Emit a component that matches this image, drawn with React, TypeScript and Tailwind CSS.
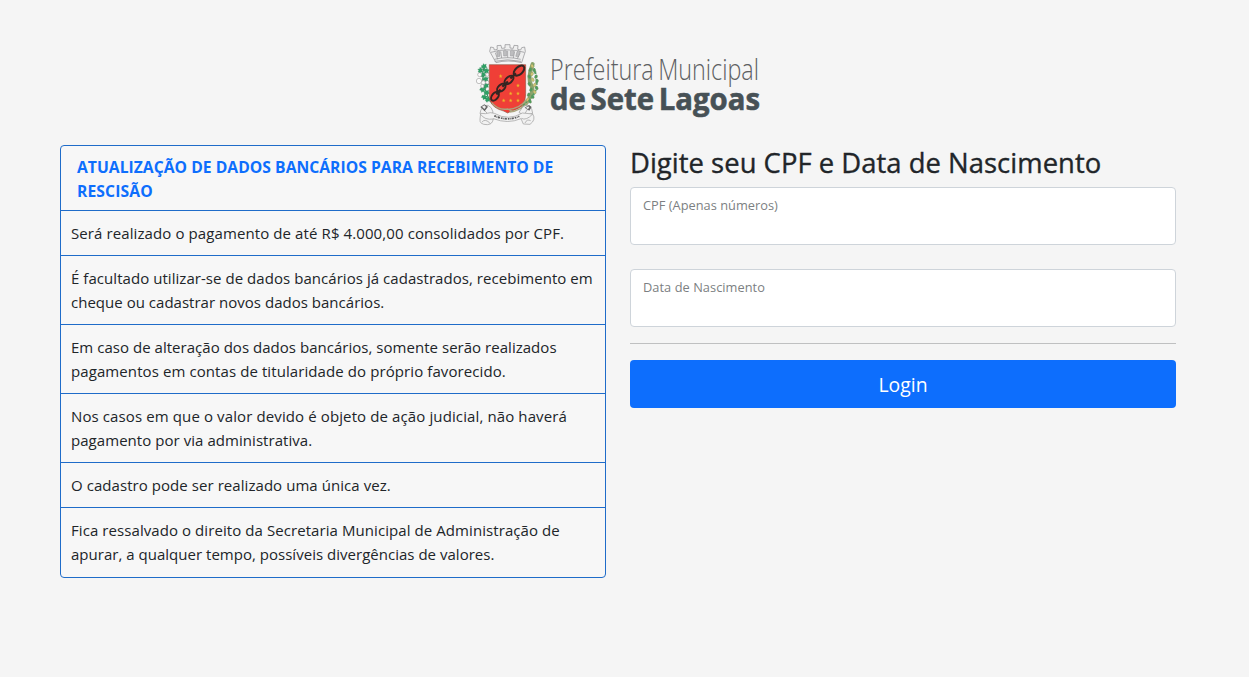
import React from "react";

type Line = { text: string; tracking: string };

const rules: Line[][] = [
  [{ text: "Será realizado o pagamento de até R$ 4.000,00 consolidados por CPF.", tracking: "tracking-[0.1px]" }],
  [
    { text: "É facultado utilizar-se de dados bancários já cadastrados, recebimento em", tracking: "tracking-[0.05px]" },
    { text: "cheque ou cadastrar novos dados bancários.", tracking: "tracking-[0.02px]" },
  ],
  [
    { text: "Em caso de alteração dos dados bancários, somente serão realizados", tracking: "tracking-[0.03px]" },
    { text: "pagamentos em contas de titularidade do próprio favorecido.", tracking: "tracking-[0.09px]" },
  ],
  [
    { text: "Nos casos em que o valor devido é objeto de ação judicial, não haverá", tracking: "tracking-[0.115px]" },
    { text: "pagamento por via administrativa.", tracking: "tracking-[0.05px]" },
  ],
  [{ text: "O cadastro pode ser realizado uma única vez.", tracking: "tracking-[0.06px]" }],
  [
    { text: "Fica ressalvado o direito da Secretaria Municipal de Administração de", tracking: "tracking-[0.075px]" },
    { text: "apurar, a qualquer tempo, possíveis divergências de valores.", tracking: "tracking-[0.02px]" },
  ],
];

const stars = [[92, 114], [144, 142], [122, 166], [144, 166], [101, 187], [122, 187], [144, 187]];
const leaves = [
  [42, 85, 20], [31, 97, -30], [49, 98, 50], [39, 110, 10], [47, 123, 40],
  [48, 143, -30], [38, 155, 50], [50, 164, 10], [43, 177, 50], [53, 184, -20],
];
const grains = [
  [187, 84], [181, 95], [193, 98], [186, 108], [178, 116], [198, 116], [188, 125], [201, 130], [178, 138],
  [194, 141], [200, 150], [183, 155], [194, 162], [176, 170], [188, 176], [173, 185], [180, 190],
];

function Crest() {
  return (
    <svg viewBox="0 0 225 276" className="h-[92px] w-[75px] shrink-0" aria-hidden="true">
      <g stroke="#8b8b8e" strokeWidth="2" fill="#efefef" strokeLinejoin="round">
        <path d="M59 40l3-13 9 2 2 7 9-2-1-11 12-1 2 9 10-1V20h15v10l10 1 2-9 12 1-1 11 9 2 3-7 9-2 2 13-11 34q-42-10-77 0z" />
        <path d="M63 43q48-15 100 0M73 64q40-10 79 0M74 70q38-9 79 0M76 44l7 20M92 40l3 20M113 38v21M134 40l-4 20M151 44l-9 18" fill="none" />
        <path d="M80 42q5-9 10 0v13l-8 1zM100 39q5-9 10 0v15h-9zM121 39q5-9 10 0l-1 15h-9zM141 41q6-8 9 1l-5 15-8-2z" fill="#bdbdbf" strokeWidth="1.2" />
      </g>

      <path d="M43 84Q32 120 44 150q8 25 22 48" fill="none" stroke="#438a5a" strokeWidth="3" />
      {leaves.map(([x, y, r]) => (
        <path key={`${x}-${y}`} transform={`translate(${x} ${y}) rotate(${r})`} d="M-8 0l4-2-1-5 5 2 4-4 1 6 5 3-5 3-1 5-5-3-4 3z" fill="#2fa065" stroke="#2a7d51" strokeWidth=".6" />
      ))}
      <g fill="#fafafa" stroke="#8a8a8a" strokeWidth="1.5">
        <circle cx="29" cy="110" r="6" /><circle cx="52" cy="110" r="5" /><circle cx="27" cy="129" r="8" />
        <circle cx="40" cy="134" r="6" /><circle cx="52" cy="133" r="5" /><circle cx="37" cy="144" r="5" />
      </g>

      <path d="M188 78q-17 44-4 65t-27 67" fill="none" stroke="#8aa56c" strokeWidth="12" strokeLinecap="round" />
      <path d="M188 80q18 45 9 76-10 29-41 49" fill="none" stroke="#4f9e62" strokeWidth="6" strokeDasharray="7 4" />
      {grains.map(([x, y], i) => (
        <ellipse key={`${x}-${y}`} cx={x} cy={y} rx="4" ry="6" transform={`rotate(${i % 2 ? 28 : -28} ${x} ${y})`} fill={i % 3 === 0 ? "#d0c474" : "#4d9e5d"} stroke="#7c8a5c" strokeWidth="1" />
      ))}

      <path d="M58 80h109v87q0 39-33 49-12 3-21 9-13-7-27-11-28-12-28-42z" fill="#ef3f37" stroke="#8a5440" strokeWidth="1.8" />
      <g fill="none" stroke="#352522" strokeWidth="6">
        <ellipse cx="75" cy="175" rx="15" ry="9" transform="rotate(-52 75 175)" />
        <path d="M79 169l13-14" strokeWidth="7" />
        <ellipse cx="94" cy="149" rx="15" ry="9" transform="rotate(-42 94 149)" />
        <path d="M97 146l17-15" strokeWidth="7" />
        <ellipse cx="117" cy="126" rx="16" ry="9" transform="rotate(-42 117 126)" />
        <path d="M121 121l17-15" strokeWidth="7" />
        <ellipse cx="147" cy="98" rx="19" ry="11" transform="rotate(-42 147 98)" />
      </g>
      {stars.map(([x, y]) => (
        <path key={`${x}-${y}`} transform={`translate(${x} ${y})`} d="M0-5l1.6 3.2L5-1 2.5 1.5 3 5 0 3.4-3 5l.5-3.5L-5-1l3.4-.8z" fill="#f5b52e" stroke="#db872b" strokeWidth=".8" />
      ))}

      <path d="M65 194q20 24 48 19l17 8M111 214q35 1 59-30M119 222q34-4 57-30" fill="none" stroke="#aba67e" strokeWidth="4" />
      <g fill="#f2f2f2" stroke="#999" strokeWidth="2" strokeLinejoin="round">
        <path d="M37 209q7-9 17-7 12 5 15 20l-9 17q-14-3-30-12 1-11 7-18zM158 207q9-8 21-3 8 9 9 22l-25 7-16-10z" />
        <path d="M32 226q15 3 29-2l12 2q42 24 84-1l31 3q11 17-8 31l-20-1-7-16q-40 17-83 0-2 17-18 18-25 0-22-17z" />
        <path d="M32 229q12 18 38 14M154 241q15 8 34-13M36 252q10-12 25 5M165 255q6-13 17-7M41 215l10 10M174 211l-8 14" fill="none" />
      </g>
      <path d="M31 207l12-8 11 7-10 14zM164 209l13-8 8 6-7 11z" fill="#666" />
      <path d="M36 206l7-4 5 5-5 6zM168 209l7-4 3 5-6 3z" fill="#eee" />
      <path d="M73 233q37 18 75 2" fill="none" stroke="#5d5d5d" strokeWidth="5" strokeDasharray="5 2 2 2 7 3" />
    </svg>
  );
}

function Wordmark() {
  return (
    <svg viewBox="0 0 215 80" className="h-[80px] w-[215px] shrink-0 overflow-visible font-['Open_Sans',sans-serif]">
      <text x="0" y="35" fontSize="29" fontWeight="300" fill="#5d6062" wordSpacing="-2" textLength="209" lengthAdjust="spacingAndGlyphs">Prefeitura Municipal</text>
      <text x="0" y="64.5" fontSize="30.5" fontWeight="700" fill="#475156" stroke="#475156" strokeWidth="0.6" wordSpacing="-3" textLength="210" lengthAdjust="spacingAndGlyphs">de Sete Lagoas</text>
    </svg>
  );
}

function Field({ id, label, tracking, type }: { id: string; label: string; tracking: string; type: string }) {
  return (
    <div className="flex h-[58px] flex-col rounded border border-[#ced4da] bg-white px-3 pt-2">
      <label htmlFor={id} className={`text-[12.8px] leading-[19px] whitespace-nowrap text-[#7c7f82] ${tracking}`}>{label}</label>
      <input id={id} type={type} className="h-6 w-full bg-transparent text-base outline-none" />
    </div>
  );
}

export default function App() {
  return (
    <main className="min-h-screen bg-[#f5f5f5] pt-[38px] pr-[73px] pl-[60px] font-['Open_Sans',sans-serif] text-[15px] leading-6 text-[#212529]">
      <header className="flex h-[107px] items-start pl-[410px]">
        <Crest />
        <div className="pt-[7px] pl-[5px]"><Wordmark /></div>
      </header>
      <div className="grid grid-cols-2 items-start gap-6">
        <section className="divide-y divide-[#1f6cc9] rounded border border-[#1f6cc9] bg-[#f7f7f7]">
          <h2 className="px-4 pt-[9px] pb-[7px] text-[15.7px] font-bold whitespace-nowrap text-[#0d6efd]">
            <span className="block tracking-[0.02px]">ATUALIZAÇÃO DE DADOS BANCÁRIOS PARA RECEBIMENTO DE</span>
            <span className="block tracking-[0.1px]">RESCISÃO</span>
          </h2>
          {rules.map((lines) => (
            <p key={lines[0].text} className="p-2.5 whitespace-nowrap last:pb-[11px]">
              {lines.map((line) => (
                <span key={line.text} className={`block w-fit ${line.tracking}`}>{line.text}</span>
              ))}
            </p>
          ))}
        </section>
        <form onSubmit={(event) => event.preventDefault()}>
          <h1 className="mb-2 h-[34px] text-[27.4px] leading-[35px] font-normal whitespace-nowrap tracking-[0.04px] [-webkit-text-stroke:0.35px_#212529]">Digite seu CPF e Data de Nascimento</h1>
          <div className="flex flex-col gap-6">
            <Field id="cpf" type="text" label="CPF (Apenas números)" tracking="tracking-[0.02px]" />
            <Field id="birth" type="text" label="Data de Nascimento" tracking="tracking-[0.05px]" />
          </div>
          <hr className="my-4 border-[#bfc0c1]" />
          <button type="submit" className="h-12 w-full rounded bg-[#0d6efd] pt-0.5 text-[19.4px] text-white">Login</button>
        </form>
      </div>
    </main>
  );
}
